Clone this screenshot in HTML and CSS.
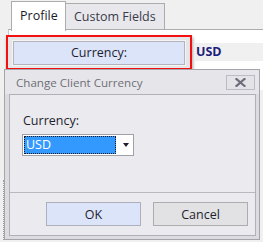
FILE: index.html
```html
<!DOCTYPE html>
<html>
<head>
<meta charset="utf-8">
<link rel="stylesheet" href="styles.css">
</head>
<body>
<div class="page">
  <div class="tabs">
    <div class="tab active">Profile</div>
    <div class="tab">Custom Fields</div>
  </div>
  <div class="panel">
    <div class="row">
      <div class="highlight">
        <div class="btn field-btn">Currency:</div>
      </div>
      <div class="value">USD</div>
    </div>
  </div>
  <div class="edge"></div>
  <div class="dialog">
    <div class="titlebar">
      <span class="title">Change Client Currency</span>
      <span class="close">
        <svg width="11" height="9" viewBox="0 0 11 9"><path d="M1.5 1 L9.5 8 M9.5 1 L1.5 8" stroke="#6e6e78" stroke-width="2.2" stroke-linecap="square"/></svg>
      </span>
    </div>
    <div class="client">
      <div class="content">
        <div class="label">Currency:</div>
        <div class="select">
          <div class="selected">USD</div>
          <div class="arrow"></div>
        </div>
      </div>
      <div class="footer">
        <div class="btn ok">OK</div>
        <div class="btn cancel">Cancel</div>
      </div>
    </div>
  </div>
</div>
</body>
</html>
```

FILE: styles.css
```css
html, body {
  margin: 0;
  padding: 0;
}
body {
  width: 263px;
  height: 242px;
  overflow: hidden;
  background: #f0f0f0;
  font-family: "Open Sans", "Noto Sans", sans-serif;
  font-size: 12px;
  color: #1e1e2e;
}
.page {
  position: relative;
  width: 263px;
  height: 242px;
}
.tabs {
  display: flex;
  align-items: flex-start;
  padding: 1px 0 0 11px;
  height: 28px;
}
.tab {
  box-sizing: border-box;
  border: 1px solid #acacac;
  border-bottom: none;
  background: #e8e8ec;
  margin-top: 2px;
  height: 26px;
  padding: 0 8px;
  line-height: 25px;
  font-size: 12.5px;
  color: #3a3a4a;
}
.tab.active {
  background: #ffffff;
  margin-top: 0;
  height: 30px;
  padding: 0 8px;
  position: relative;
  z-index: 1;
  line-height: 28px;
  color: #1a1a2a;
  width: 55px;
}
.tab + .tab {
  border-left: none;
  width: 99px;
}
.panel {
  margin-left: 8px;
  border-top: 1px solid #acacac;
  border-left: 1px solid #c8c8c8;
  background: #ffffff;
  height: 60px;
}
.row {
  display: flex;
  align-items: flex-start;
  padding-top: 5px;
}
.highlight {
  margin-left: -3px;
  width: 182px;
  height: 31px;
  border: 2.5px solid #f21010;
  box-shadow: 1px 2px 3px rgba(0,0,0,0.35);
  display: flex;
  align-items: center;
  justify-content: center;
  background: #e6e6e8;
}
.btn {
  box-sizing: border-box;
  display: flex;
  align-items: center;
  justify-content: center;
  border: 1px solid #adadad;
  font-size: 12.5px;
  color: #1e1e2e;
}
.field-btn {
  width: 172px;
  height: 24px;
  background: #dce4fa;
  border-color: #b4b4bc;
  box-shadow: 0 0 0 1px #f4f4f6;
}
.value {
  margin-left: 2px;
  margin-top: 8px;
  flex: 1;
  height: 18px;
  background: #f0f0f0;
  font-weight: bold;
  color: #1c1c7c;
  font-size: 12.5px;
  line-height: 18px;
  padding-left: 2px;
}
.edge {
  position: absolute;
  left: 3px;
  top: 180px;
  height: 60px;
  border-left: 1px dotted #9a9aa0;
}
.dialog {
  position: absolute;
  left: 4px;
  top: 69px;
  width: 256px;
  height: 171px;
  box-sizing: border-box;
  border: 1px solid #a4a4aa;
  background: #dcdce0;
  padding: 0 3px 3px 4px;
  display: flex;
  flex-direction: column;
}
.titlebar {
  height: 24px;
  display: flex;
  align-items: center;
  justify-content: space-between;
  background: #e6e6ea;
  margin: 0 -3px 0 -4px;
  padding-right: 4px;
  padding-left: 11px;
}
.title {
  color: #6e6e76;
  font-size: 11.6px;
}
.close {
  box-sizing: border-box;
  width: 29px;
  height: 15px;
  border: 1px solid #bcbcc2;
  background: #e4e4e8;
  display: flex;
  align-items: center;
  justify-content: center;
  margin-top: 1px;
}
.client {
  flex: 1;
  box-sizing: border-box;
  border: 1px solid #b0b0b6;
  background: #ebebef;
  display: flex;
  flex-direction: column;
}
.content {
  height: 98px;
  box-sizing: border-box;
  border-bottom: 1px solid #b8b8be;
  padding: 17px 0 0 13px;
}
.label {
  font-size: 12.5px;
  color: #1e1e2e;
  height: 20px;
  line-height: 18px;
}
.select {
  margin-top: 2px;
  margin-left: -1px;
  width: 112px;
  height: 22px;
  box-sizing: border-box;
  border: 1px solid #a0a0a8;
  background: #ffffff;
  display: flex;
  align-items: center;
  padding: 1px;
}
.selected {
  box-sizing: border-box;
  width: 92px;
  height: 18px;
  background: #3399ff;
  border: 1px dotted #1a1a1a;
  color: #ffffff;
  font-size: 12.5px;
  line-height: 16px;
  padding-left: 1px;
}
.arrow {
  margin-left: 7px;
  width: 0;
  height: 0;
  border-left: 3.5px solid transparent;
  border-right: 3.5px solid transparent;
  border-top: 4px solid #1e1e2e;
}
.footer {
  flex: 1;
  display: flex;
  align-items: flex-start;
  padding: 9px 0 0 36px;
  gap: 12px;
}
.ok, .cancel {
  width: 95px;
  height: 24px;
}
.ok {
  background: #dce4fa;
  border-color: #adb0bc;
}
.cancel {
  background: #e2e2e4;
  border-color: #adadb0;
}
```
